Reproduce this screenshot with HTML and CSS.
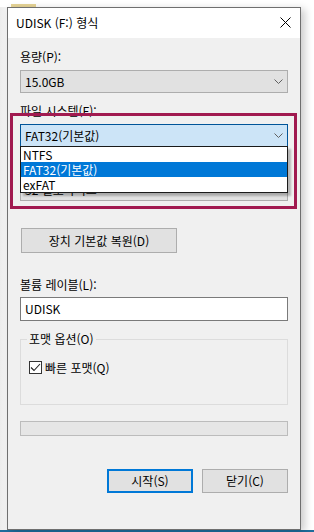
FILE: index.html
```html
<!DOCTYPE html>
<html lang="ko">
<head>
<meta charset="utf-8">
<link rel="stylesheet" href="styles.css">
</head>
<body>
<div class="screen">
  <div class="topstrip"><div class="folder"></div></div>
  <div class="dialog">
    <div class="titlebar">
      <span class="title">UDISK (F:) 형식</span>
      <svg class="close" width="11" height="11" viewBox="0 0 11 11"><path d="M0.5 0.5 L10.5 10.5 M10.5 0.5 L0.5 10.5" stroke="#000" stroke-width="1" fill="none"/></svg>
    </div>
    <div class="body">
      <div class="label">용량(P):</div>
      <div class="select"><span>15.0GB</span><svg class="chev" width="9" height="5" viewBox="0 0 9 5"><path d="M0.5 0.5 L4.5 4.5 L8.5 0.5" stroke="#606060" fill="none"/></svg></div>

      <div class="label gap">파일 시스템(F):</div>
      <div class="combo">
        <div class="select focused"><span>FAT32(기본값)</span><svg class="chev" width="9" height="5" viewBox="0 0 9 5"><path d="M0.5 0.5 L4.5 4.5 L8.5 0.5" stroke="#606060" fill="none"/></svg></div>
        <ul class="list">
          <li>NTFS</li>
          <li class="sel">FAT32(기본값)</li>
          <li>exFAT</li>
        </ul>
        <div class="highlight"></div>
      </div>

      <div class="label gap"></div>
      <div class="select hidden-under"><span class="partial">32 킬로바이트</span><svg class="chev" width="9" height="5" viewBox="0 0 9 5"><path d="M0.5 0.5 L4.5 4.5 L8.5 0.5" stroke="#606060" fill="none"/></svg></div>

      <button class="btn restore">장치 기본값 복원(D)</button>

      <div class="label vol">볼륨 레이블(L):</div>
      <div class="input">UDISK</div>

      <fieldset class="group">
        <legend>포맷 옵션(O)</legend>
        <div class="checkrow">
          <span class="check"><svg width="11" height="11" viewBox="0 0 11 11"><path d="M1 5.5 L4 8.5 L10 2" stroke="#222" stroke-width="1.1" fill="none"/></svg></span>
          <span>빠른 포맷(Q)</span>
        </div>
      </fieldset>

      <div class="progress"></div>

      <div class="actions">
        <button class="btn primary">시작(S)</button>
        <button class="btn">닫기(C)</button>
      </div>
    </div>
  </div>
  <div class="taskbar"></div>
</div>
</body>
</html>
```

FILE: styles.css
```css
* { box-sizing: border-box; }
html, body { margin: 0; padding: 0; }
body {
  background: #ffffff;
  font-family: "Noto Sans CJK KR", "Noto Sans", sans-serif;
  font-size: 12px;
  color: #000;
}
.screen {
  width: 314px;
  height: 532px;
  overflow: hidden;
  background: linear-gradient(to right, #ececec 0, #f4f4f4 7px, #ffffff 7px);
  position: relative;
}
.topstrip {
  height: 7px;
  background: #ffffff;
  padding-top: 4px;
}
.folder {
  margin-left: 11px;
  width: 25px;
  height: 3px;
  background: #e6d496;
}
.dialog {
  margin-left: 7px;
  width: 294px;
  height: 523px;
  border: 1px solid #6f6f6f;
  background: #f0f0f0;
  box-shadow: 4px 2px 8px rgba(0,0,0,0.2);
  display: flex;
  flex-direction: column;
  position: relative;
  z-index: 1;
}
.titlebar {
  height: 30px;
  background: #ffffff;
  display: flex;
  align-items: center;
  justify-content: space-between;
  padding: 0 9px 0 8px;
}
.title { line-height: 16px; }
.close { display: block; margin-top: -1px; }
.body {
  flex: 1;
  padding: 11px 12px 0 12px;
  display: flex;
  flex-direction: column;
}
.label {
  line-height: 16px;
  height: 16px;
  margin-bottom: 5px;
}
.label.gap { margin-top: 10px; }
.label.vol { margin-top: 24px; margin-bottom: 4px; }
.select {
  height: 23px;
  background: #e1e1e1;
  border: 1px solid #adadad;
  display: flex;
  align-items: center;
  justify-content: space-between;
  padding: 0 4px 0 4px;
  line-height: 16px;
}
.select .chev { display: block; }
.select.focused {
  background: #cce4f7;
  border-color: #005499;
}
.hidden-under .partial { margin-top: 1px; }
.combo { position: relative; }
.list {
  position: absolute;
  left: 0;
  right: 0;
  top: 22px;
  margin: 0;
  padding: 0;
  list-style: none;
  background: #ffffff;
  border: 1px solid #1a1a1a;
  box-shadow: 3px 3px 2px rgba(0,0,0,0.25);
  z-index: 2;
}
.list li {
  height: 15px;
  line-height: 15px;
  padding-left: 2px;
}
.list li.sel {
  background: #0078d7;
  color: #ffffff;
}
.highlight {
  position: absolute;
  left: -10px;
  right: -9px;
  top: -11px;
  height: 96px;
  border: 3px solid #a11a50;
  z-index: 3;
  pointer-events: none;
}
.btn {
  font: inherit;
  color: #000;
  background: #e1e1e1;
  border: 1px solid #adadad;
  border-radius: 0;
  padding: 0;
  line-height: 16px;
}
.restore {
  margin-top: 27px;
  width: 156px;
  height: 25px;
  margin-left: 1px;
  align-self: flex-start;
}
.input {
  height: 24px;
  background: #ffffff;
  border: 1px solid #7a7a7a;
  padding-left: 4px;
  line-height: 21px;
}
.group {
  margin: 10px 0 0 0;
  padding: 0 0 29px 0;
  border: 1px solid #dcdcdc;
  min-inline-size: 0;
}
.group legend {
  margin-left: 6px;
  padding: 0 2px;
  line-height: 16px;
}
.checkrow {
  margin-top: 12px;
  margin-left: 8px;
  height: 16px;
  display: flex;
  align-items: center;
  gap: 3px;
}
.check {
  width: 13px;
  height: 13px;
  border: 1px solid #333333;
  background: #ffffff;
  display: flex;
  align-items: center;
  justify-content: center;
}
.check svg { display: block; }
.progress {
  margin-top: 16px;
  height: 15px;
  background: #e6e6e6;
  border: 1px solid #bcbcbc;
}
.actions {
  margin-top: 33px;
  display: flex;
  justify-content: flex-end;
  gap: 9px;
}
.actions .btn {
  width: 86px;
  height: 24px;
}
.actions .btn.primary {
  border: 2px solid #0078d7;
}
.taskbar {
  position: absolute;
  left: 0;
  right: 0;
  bottom: 0;
  height: 2px;
  background: #1d6d9c;
}
```
